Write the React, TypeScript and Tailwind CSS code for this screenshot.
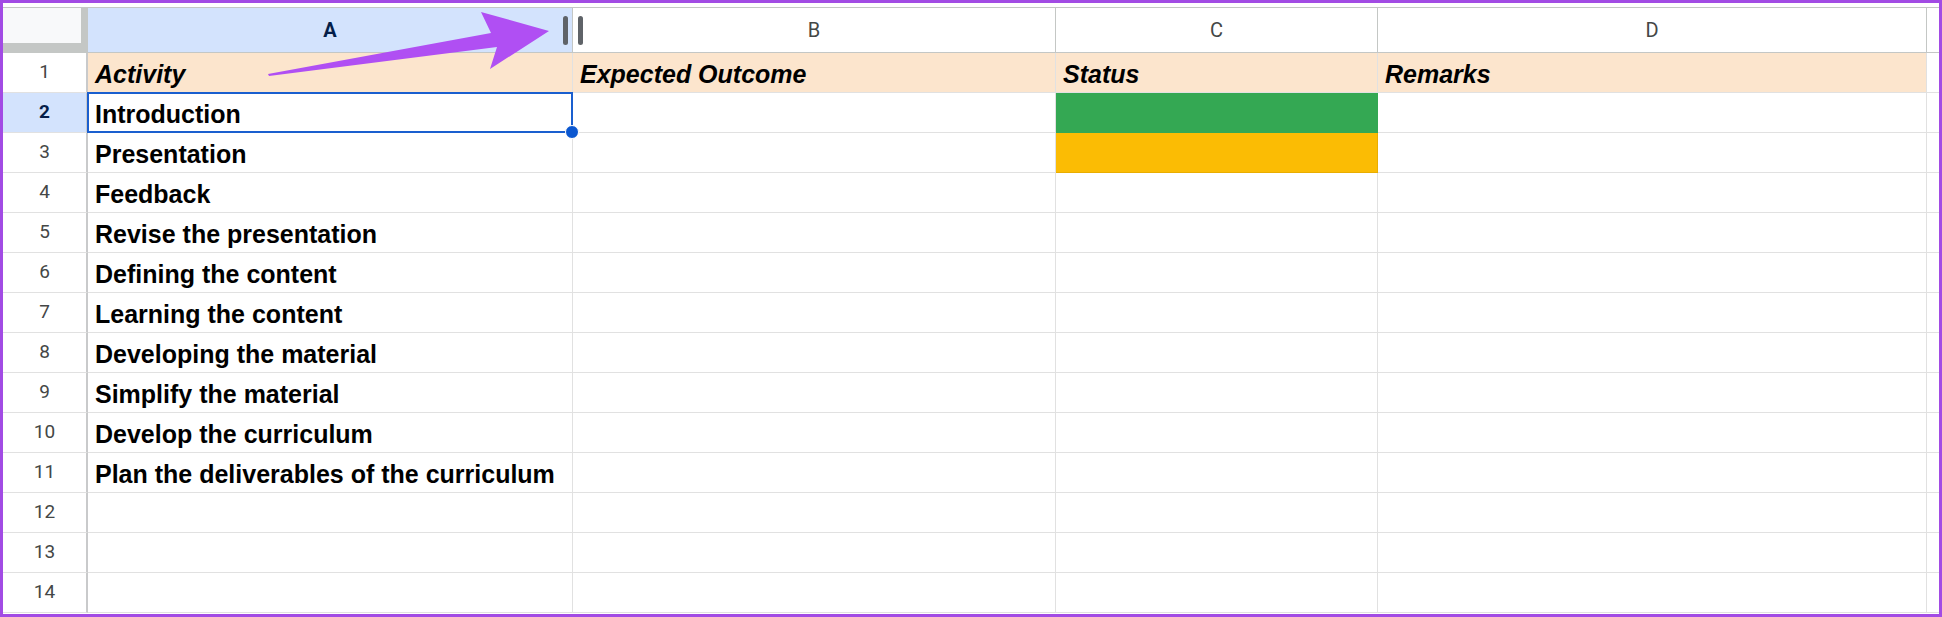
import React from "react";

const activities = [
  "Introduction",
  "Presentation",
  "Feedback",
  "Revise the presentation",
  "Defining the content",
  "Learning the content",
  "Developing the material",
  "Simplify the material",
  "Develop the curriculum",
  "Plan the deliverables of the curriculum",
  "",
  "",
  "",
];

const cellFont = { fontFamily: '"Liberation Sans", Arial, sans-serif' };
const headFont = { fontFamily: "Roboto, Arial, sans-serif" };

function Cell({
  w,
  children,
  className = "",
}: {
  w: string;
  children?: React.ReactNode;
  className?: string;
}) {
  return (
    <div
      className={`${w} shrink-0 h-full box-border border-r border-b flex items-end pl-[7px] pb-[4px] text-[25px] leading-[28px] font-bold text-black whitespace-nowrap overflow-hidden ${className}`}
      style={cellFont}
    >
      {children}
    </div>
  );
}

function RowHead({ n, active }: { n: number; active?: boolean }) {
  return (
    <div
      className={`w-[85px] shrink-0 h-full box-border border-r-2 border-r-[#c9cacb] border-b border-b-[#e1e1e1] flex items-center justify-center text-[19px] ${
        active ? "bg-[#d3e3fd] font-bold text-[#041e49]" : "bg-white text-[#444746]"
      }`}
      style={headFont}
    >
      {n}
    </div>
  );
}

export default function App() {
  return (
    <div className="relative w-[1942px] h-[617px] box-border border-[3px] border-[#a24be4] bg-white overflow-hidden">
      <div className="h-[4px]" />

      {/* column headers */}
      <div className="flex h-[46px] border-t border-[#c4c7c5]" style={headFont}>
        <div className="w-[85px] shrink-0 h-full box-border border-r-[7px] border-b-[10px] border-[#c4c7c5] bg-[#f8f9fa]" />
        <div className="w-[485px] shrink-0 h-full box-border border-r border-b border-[#c4c7c5] bg-[#d3e3fd] flex items-center justify-center text-[20px] font-bold text-[#041e49]">
          A
        </div>
        <div className="w-[483px] shrink-0 h-full box-border border-r border-b border-[#c4c7c5] flex items-center justify-center text-[20px] text-[#444746]">
          B
        </div>
        <div className="w-[322px] shrink-0 h-full box-border border-r border-b border-[#c4c7c5] flex items-center justify-center text-[20px] text-[#444746]">
          C
        </div>
        <div className="w-[549px] shrink-0 h-full box-border border-r border-b border-[#c4c7c5] flex items-center justify-center text-[20px] text-[#444746]">
          D
        </div>
        <div className="flex-1 h-full box-border border-b border-[#c4c7c5]" />
      </div>

      {/* row 1: titles */}
      <div className="flex h-[40px]">
        <RowHead n={1} />
        <Cell w="w-[485px]" className="bg-[#fce5cd] border-[#e1e1e1] italic">
          Activity
        </Cell>
        <Cell w="w-[483px]" className="bg-[#fce5cd] border-[#e1e1e1] italic">
          Expected Outcome
        </Cell>
        <Cell w="w-[322px]" className="bg-[#fce5cd] border-[#e1e1e1] italic">
          Status
        </Cell>
        <Cell w="w-[549px]" className="bg-[#fce5cd] border-[#e1e1e1] italic">
          Remarks
        </Cell>
        <div className="flex-1 h-full box-border border-b border-[#e1e1e1]" />
      </div>

      {activities.map((a, i) => {
        const n = i + 2;
        let status = "border-[#e1e1e1]";
        if (n === 2) status = "bg-[#34a853] border-[#34a853]";
        if (n === 3) status = "bg-[#fbbc04] border-[#e9ad00]";
        return (
          <div key={n} className="flex h-[40px]">
            <RowHead n={n} active={n === 2} />
            <Cell w="w-[485px]" className="border-[#e1e1e1]">
              {a}
            </Cell>
            <Cell w="w-[483px]" className="border-[#e1e1e1]" />
            <Cell w="w-[322px]" className={status} />
            <Cell w="w-[549px]" className="border-[#e1e1e1]" />
            <div className="flex-1 h-full box-border border-b border-[#e1e1e1]" />
          </div>
        );
      })}

      {/* selection around A2 */}
      <div className="absolute left-[84px] top-[89px] w-[486px] h-[41px] box-border border-2 border-[#1a5fcf] pointer-events-none" />
      <div className="absolute left-[562px] top-[122px] w-[14px] h-[14px] rounded-full bg-[#0b57d0] border border-white pointer-events-none" />

      {/* column resize grip */}
      <div className="absolute left-[560px] top-[13px] w-[5px] h-[29px] rounded-full bg-[#5f6368]" />
      <div className="absolute left-[575px] top-[13px] w-[5px] h-[29px] rounded-full bg-[#5f6368]" />

      {/* purple arrow */}
      <svg
        className="absolute left-0 top-0 pointer-events-none"
        width="600"
        height="100"
        viewBox="3 3 600 100"
      >
        <polygon
          points="268,74 491,33 481,12 549,31 490,69 497,47 269,76"
          fill="#b04ff3"
        />
      </svg>
    </div>
  );
}
